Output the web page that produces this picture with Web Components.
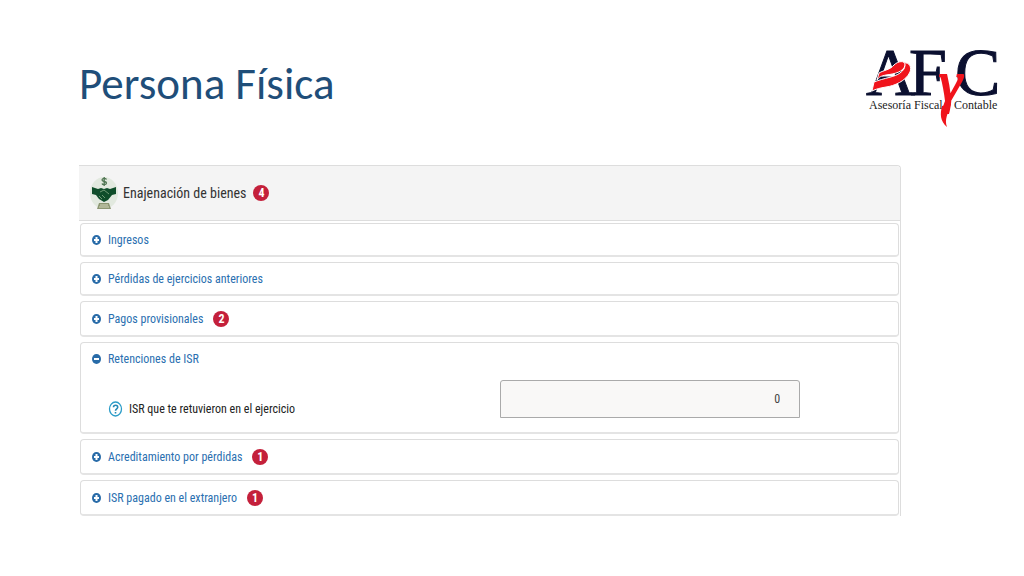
<!DOCTYPE html>
<html lang="es">
<head>
<meta charset="utf-8">
<meta name="viewport" content="width=device-width, initial-scale=1">
<title>Persona Física</title>
<style>
    body {
        margin: 0;
        background: #fff;
        font-family: "Roboto Condensed", Roboto, "Liberation Sans", sans-serif;
    }
</style>
</head>
<body>

<fiscal-slide>
    <span slot="title">Persona Física</span>
    <tax-panel heading="Enajenación de bienes" count="4">
        <tax-section heading="Ingresos"></tax-section>
        <tax-section heading="Pérdidas de ejercicios anteriores"></tax-section>
        <tax-section heading="Pagos provisionales" count="2"></tax-section>
        <tax-section heading="Retenciones de ISR" open>
            <amount-field label="ISR que te retuvieron en el ejercicio" value="0"></amount-field>
        </tax-section>
        <tax-section heading="Acreditamiento por pérdidas" count="1"></tax-section>
        <tax-section heading="ISR pagado en el extranjero" count="1"></tax-section>
    </tax-panel>
</fiscal-slide>

<template id="fiscal-slide-template">
    <style>
        :host {
            display: block;
            padding: 30px 0 60px;
        }
        header {
            display: flex;
            justify-content: space-between;
            align-items: center;
            padding: 0 22px 0 79px;
            height: 108px;
        }
        h1 {
            margin: 0;
            font: 400 45px/48px Carlito, Lato, sans-serif;
            color: #1f4e79;
        }
        main {
            padding: 27px 12% 0 79px;
        }
    </style>
    <header>
        <h1><slot name="title"></slot></h1>
        <company-logo></company-logo>
    </header>
    <main><slot></slot></main>
</template>

<template id="company-logo-template">
    <style>
        :host { display: block; }
        svg { display: block; }
        .initial { font: 68px "Liberation Serif", serif; fill: #0b1030; stroke: #0b1030; stroke-width: 1; }
        .caption { font: 12px "Liberation Serif", serif; fill: #222; }
        .link { font: italic 58px "Liberation Serif", serif; fill: #f0141c; stroke: #f0141c; stroke-width: 2; }
        .ribbon { fill: #f0141c; stroke: #fff; stroke-width: 1; }
    </style>
    <svg width="138" height="108" viewBox="0 -10 138 108" role="img" aria-label="AFyC Asesoría Fiscal y Contable">
        <text class="initial" x="2" y="55">A</text>
        <text class="initial" x="45" y="55">F</text>
        <text class="initial" x="91" y="55">C</text>
        <path class="ribbon" d="M8 51L10 42C20 38 31 37 36 33C40 30 42 27 40 23C45 22 48 27 46 32C42 41 30 46 22 47C16 48 12 49 8 51Z"/>
        <path class="ribbon" d="M13 40L15 33C20 30 26 30 30 25C34 21 41 20 41 25C40 32 30 34 22 35C17 36 15 37 13 40Z"/>
        <text class="caption" x="5" y="69">Asesoría Fiscal</text>
        <text class="link" x="75" y="61">γ</text>
        <path d="M78 66L87 64C84 73 80 80 83 87C76 81 76 74 78 66Z" fill="#f0141c"/>
        <text class="caption" x="90" y="69">Contable</text>
    </svg>
</template>

<template id="tax-panel-template">
    <style>
        :host {
            display: block;
            border: solid #ddd;
            border-width: 1px 1px 0 0;
            border-top-right-radius: 4px;
        }
        .heading {
            display: flex;
            align-items: center;
            height: 54px;
            padding-left: 11px;
            background: #f4f4f4;
            border-bottom: 1px solid #ddd;
            border-top-right-radius: 4px;
        }
        h2 {
            margin: 0 7px 0 4px;
            font-size: 14px;
            line-height: 20px;
            font-weight: 400;
            color: #333;
        }
        .sections {
            display: flex;
            flex-direction: column;
            gap: 5px;
            padding: 2px 1px 0;
        }
    </style>
    <div class="heading">
        <svg width="29" height="36" viewBox="0 0 29 36" aria-hidden="true">
            <ellipse cx="14" cy="18" rx="14" ry="16" fill="#e2e9df"/>
            <path d="M16.500 4.500C16 3 12 3 12 5C12 7 16.500 6 16.500 8C16.500 10 12.500 10 12 8.500M14.200 2V11" fill="none" stroke="#4f7552" stroke-width="1.300"/>
            <path d="M2 12L8 14L11 13L14 14L17 13L20 14L26 12V19L22 20L18 25L14 27L9 24L6 20L2 19Z" fill="#0f4d2a"/>
            <path d="M10 17L14 15L19 19M9 21L12 24M12 20L15 23" fill="none" stroke="#6f9a75" stroke-width="1"/>
            <path d="M9 28H19L21 34H7Z" fill="#8c9672"/>
            <path d="M10 30H18M9 32H19" stroke="#d5d8bd" stroke-width="1"/>
        </svg>
        <h2></h2>
        <count-badge></count-badge>
    </div>
    <div class="sections"><slot></slot></div>
</template>

<template id="count-badge-template">
    <style>
        :host {
            display: flex;
            justify-content: center;
            align-items: center;
            width: 16px;
            height: 16px;
            border-radius: 50%;
            background: #c4203b;
            color: #fff;
            font-size: 12px;
            line-height: 16px;
            font-weight: 700;
        }
        :host([hidden]) { display: none; }
    </style>
    <slot></slot>
</template>

<template id="tax-section-template">
    <style>
        :host {
            display: block;
            border: 1px solid #ddd;
            border-bottom-width: 2px;
            border-bottom-color: #e4e4e4;
            border-radius: 4px;
            background: #fff;
        }
        button {
            display: flex;
            align-items: center;
            width: 100%;
            min-height: 31px;
            padding: 0 11px;
            border: 0;
            background: none;
            font: inherit;
            font-size: 12px;
            line-height: 16px;
            color: #2a6fb0;
            text-align: left;
            cursor: pointer;
        }
        :host([count]) button { min-height: 33px; }
        svg { flex: none; margin-right: 7px; }
        count-badge { margin-left: 10px; }
        :host([open]) .minus { display: block; }
        :host([open]) .plus, .minus { display: none; }
        .body { display: none; padding: 6px 0 14px; }
        :host([open]) .body { display: block; }
    </style>
    <button type="button">
        <svg width="9" height="10" viewBox="0 0 9 10" aria-hidden="true">
            <ellipse cx="4.500" cy="5" rx="4.500" ry="5" fill="#286ba8"/>
            <path class="plus" d="M4.500 2V8M2 5H7" stroke="#fff" stroke-width="2"/>
            <path class="minus" d="M2 5H7" stroke="#fff" stroke-width="2"/>
        </svg>
        <span></span>
        <count-badge></count-badge>
    </button>
    <div class="body"><slot></slot></div>
</template>

<template id="amount-field-template">
    <style>
        :host {
            display: grid;
            grid-template-columns: 1fr 300px;
            align-items: center;
            padding-right: 98px;
        }
        label {
            display: flex;
            align-items: center;
            gap: 6px;
            padding: 20px 0 0 27px;
            font-size: 12px;
            line-height: 16px;
            color: #222;
        }
        input {
            box-sizing: border-box;
            width: 100%;
            height: 38px;
            padding: 0 19px;
            border: 1px solid #aaa;
            border-radius: 3px 3px 0 0;
            background: #f9f8f7;
            font: inherit;
            font-size: 12px;
            color: #444;
            text-align: right;
        }
    </style>
    <label for="amount">
        <svg width="15" height="16" viewBox="0 0 15 16" aria-hidden="true">
            <ellipse cx="7.500" cy="8" rx="6" ry="7" fill="none" stroke="#2a9cc8" stroke-width="1.300"/>
            <path d="M5.500 6.200C5.500 3.500 9.700 3.500 9.700 6.200C9.700 7.800 7.500 7.800 7.500 9.800M7.500 11V12.500" fill="none" stroke="#2389b5" stroke-width="1.600"/>
        </svg>
        <span></span>
    </label>
    <input id="amount" type="text" inputmode="numeric">
</template>

<script>
    class TemplateElement extends HTMLElement {

        constructor() {
            super();

            let template = document.querySelector("#" + this.localName + "-template");
            this.attachShadow({mode: "open"});
            this.shadowRoot.appendChild(template.content.cloneNode(true));
        }

        find(selector) {
            return this.shadowRoot.querySelector(selector);
        }

        renderCount() {
            let badge = this.find("count-badge");
            badge.hidden = !this.hasAttribute("count");
            badge.textContent = this.getAttribute("count") || "";
        }
    }

    class FiscalSlide extends TemplateElement {}

    class CompanyLogo extends TemplateElement {}

    class CountBadge extends TemplateElement {}

    class TaxPanel extends TemplateElement {

        connectedCallback() {
            this.find("h2").textContent = this.getAttribute("heading");
            this.renderCount();
        }
    }

    class TaxSection extends TemplateElement {

        connectedCallback() {
            let button = this.find("button");

            this.find("span").textContent = this.getAttribute("heading");
            this.renderCount();

            button.setAttribute("aria-expanded", this.hasAttribute("open"));
            button.onclick = () => {
                this.toggleAttribute("open");
                button.setAttribute("aria-expanded", this.hasAttribute("open"));
            };
        }
    }

    class AmountField extends TemplateElement {

        connectedCallback() {
            this.find("span").textContent = this.getAttribute("label");
            this.find("input").value = this.getAttribute("value");
        }
    }

    customElements.define("count-badge", CountBadge);
    customElements.define("company-logo", CompanyLogo);
    customElements.define("amount-field", AmountField);
    customElements.define("tax-section", TaxSection);
    customElements.define("tax-panel", TaxPanel);
    customElements.define("fiscal-slide", FiscalSlide);
</script>
</body>
</html>
